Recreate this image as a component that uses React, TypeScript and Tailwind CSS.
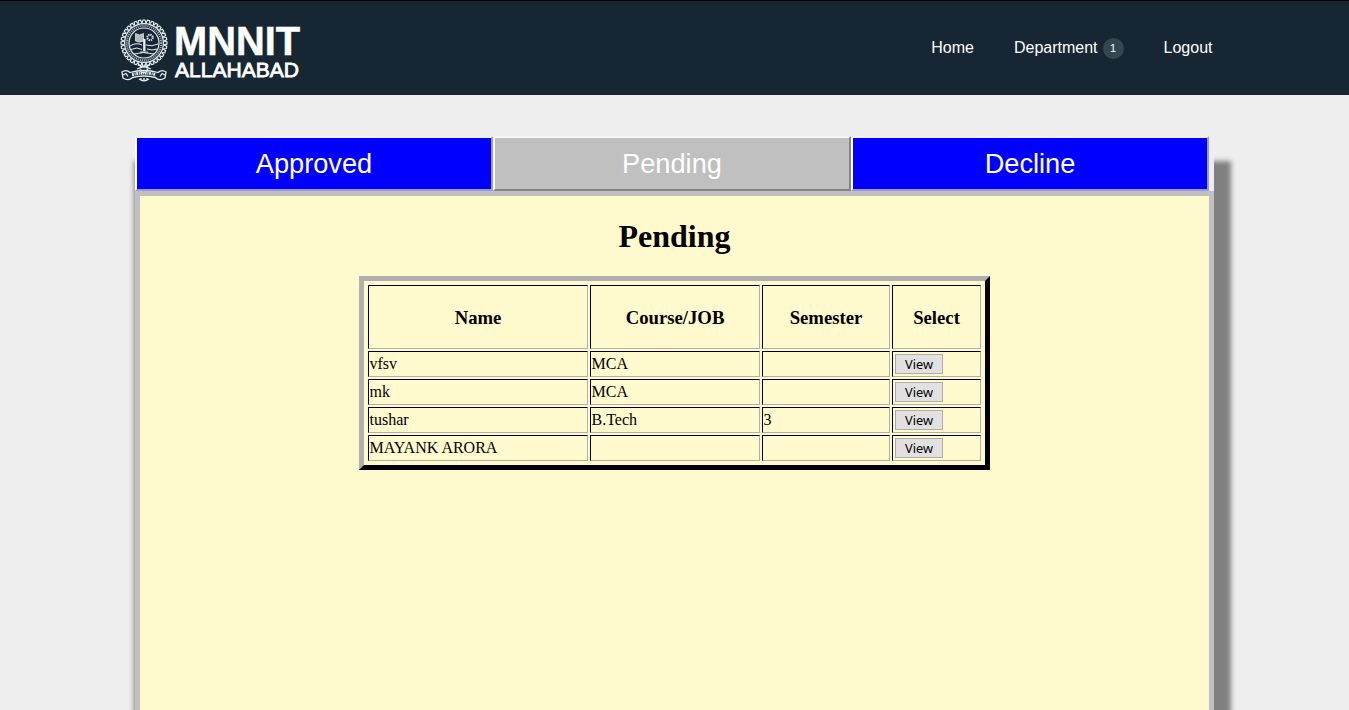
import React from "react";

const tabs = [
  { label: "Approved", tone: "bg-[#0000ff] border-t-[#f0f0f8] border-l-white border-r-[#9c9cc4] border-b-[#9c9cc4]", width: "w-[358px]" },
  { label: "Pending", tone: "bg-[#c0c0c0] border-t-[#f6f6f6] border-l-white border-r-[#858585] border-b-[#858585]", width: "w-[358px]" },
  { label: "Decline", tone: "bg-[#0000ff] border-t-[#f0f0f8] border-l-white border-r-[#9c9cc4] border-b-[#9c9cc4]", width: "w-[358px]" },
];

const columns = [
  { label: "Name", width: "w-[220px]" },
  { label: "Course/JOB", width: "w-[170px]" },
  { label: "Semester", width: "w-[128px]" },
  { label: "Select", width: "w-[89px]" },
];

const rows = [
  ["vfsv", "MCA", ""],
  ["mk", "MCA", ""],
  ["tushar", "B.Tech", "3"],
  ["MAYANK ARORA", "", ""],
];

const cell = "border border-t-black border-l-black border-r-[#b0b0a8] border-b-[#b0b0a8]";

const teeth = Array.from({ length: 32 }, (_, i) => i * 11.25);

function Emblem() {
  return (
    <svg className="h-[66px] w-[50px] shrink-0" viewBox="0 0 50 66" fill="none" stroke="#e6eff2">
      {teeth.map((angle) => (
        <path key={angle} d="M23.1 4.9L23.9 2h2.2l.8 2.9" strokeWidth="1.15" transform={`rotate(${angle} 25 25)`} />
      ))}
      <circle cx="25" cy="25" r="19.4" strokeWidth="1.2" />
      <circle cx="25" cy="25" r="17.2" strokeWidth="2" strokeDasharray="1.1 .9" opacity=".7" />
      <circle cx="25" cy="25" r="15" strokeWidth="1.2" />
      <path d="M16.5 15.5l4 1.5 4-1.5v7.5l-4 1.2-4-1.2z" fill="#e6eff2" fillOpacity=".75" strokeWidth=".7" />
      <circle cx="31" cy="19.5" r="2.7" strokeWidth="2" strokeDasharray="1.3 .82" />
      <path d="M25.3 21v12" strokeWidth="2.4" />
      <path d="M21 34h8M11 28q6-4 12-1M27 27q6 2 12-1M12 31.5q6-3 11 0M28 31q5 2 10 0M15 36q9-3 20 0" strokeWidth="1" />
      <path d="M19 46l4 3-5 2M31 46l-4 3 5 2M21 49h8" strokeWidth="1.3" />
      <circle cx="25" cy="51" r="3.5" strokeWidth="1.8" strokeDasharray="1.2 .8" />
      <path d="M3 54q4-3 8 .5 14-4 28 0 4-3.5 8-.5l-1 6q-6 3.5-9.5-.5-11.5-3-23 0-4 4-9.5.5z" strokeWidth="1.3" />
      <path d="M13 56.6q12-3 24 0" strokeWidth="3" strokeDasharray="1.8 .8 1 .7" />
      <path d="M4 57l3-1.5 2 3M46 57l-3-1.5-2 3M20 61q5 3.5 10 0M22 60v3M25 60v3.5M28 60v3" strokeWidth="1.3" />
    </svg>
  );
}

export default function App() {
  return (
    <div className="h-[710px] overflow-hidden bg-[#eeeeee] text-black">
      <header className="flex h-[95px] justify-between border-t border-black bg-[#162733] pr-[136.5px] pl-[119px] font-['Liberation_Sans',Arial,sans-serif] text-white">
        <div className="flex pt-[17px]">
          <Emblem />
          <svg className="h-[66px] w-[134px]" viewBox="0 0 134 66" fill="white" fontFamily="Liberation Sans, Arial, sans-serif">
            <text x="5" y="36.7" fontSize="40" fontWeight="700" stroke="white" strokeWidth=".5" textLength="126" lengthAdjust="spacingAndGlyphs">MNNIT</text>
            <text x="6" y="58.7" fontSize="20.5" stroke="white" strokeWidth=".8" textLength="124" lengthAdjust="spacingAndGlyphs">ALLAHABAD</text>
          </svg>
        </div>
        <nav className="flex h-[93px] items-center gap-10 text-base">
          <a>Home</a>
          <a className="flex items-center">
            Department
            <span className="mt-0.5 ml-[5px] flex size-[21px] items-center justify-center rounded-full bg-[#364650] text-[11px]">1</span>
          </a>
          <a>Logout</a>
        </nav>
      </header>

      <main className="mx-[135px] mt-[41px] h-[640px] w-[1079px] bg-[#eeeeee] shadow-[8px_34px_5px_9px_#808080]">
        <div className="flex h-[55px] font-['Liberation_Sans',Arial,sans-serif] text-[27.2px] text-white">
          {tabs.map((tab) => (
            <button key={tab.label} className={`flex h-[55px] items-center justify-center border-2 pt-0.5 ${tab.width} ${tab.tone}`}>
              {tab.label}
            </button>
          ))}
        </div>
        <section className="flex h-[585px] flex-col items-center border-[5px] border-[#c0c0c0] bg-[#fff9ce] font-['Liberation_Serif','Times_New_Roman',serif]">
          <h1 className="mt-[22px] text-[32px] leading-[37px] font-bold">Pending</h1>
          <table className="mt-[21px] w-[631px] table-fixed border-separate border-spacing-[2px] border-[5px] border-t-[#b0b0b0] border-r-black border-b-black border-l-[#b0b0b0] p-0.5 text-base">
            <thead>
              <tr className="h-16">
                {columns.map((column) => (
                  <th key={column.label} className={`${cell} ${column.width} p-0 pt-0.5 text-[18.72px] font-bold`}>{column.label}</th>
                ))}
              </tr>
            </thead>
            <tbody>
              {rows.map((row) => (
                <tr key={row[0]} className="h-[26px]">
                  {row.map((value, index) => (
                    <td key={index} className={`${cell} p-0 pr-px pl-[0.5px] leading-[18px]`}>{value}</td>
                  ))}
                  <td className={`${cell} p-0 px-0.5`}>
                    <button className="flex h-5 w-12 items-center justify-center border border-[#adadad] bg-[#e1e1e1] font-['Noto_Sans',sans-serif] text-[12.8px] leading-none">View</button>
                  </td>
                </tr>
              ))}
            </tbody>
          </table>
        </section>
      </main>
    </div>
  );
}
